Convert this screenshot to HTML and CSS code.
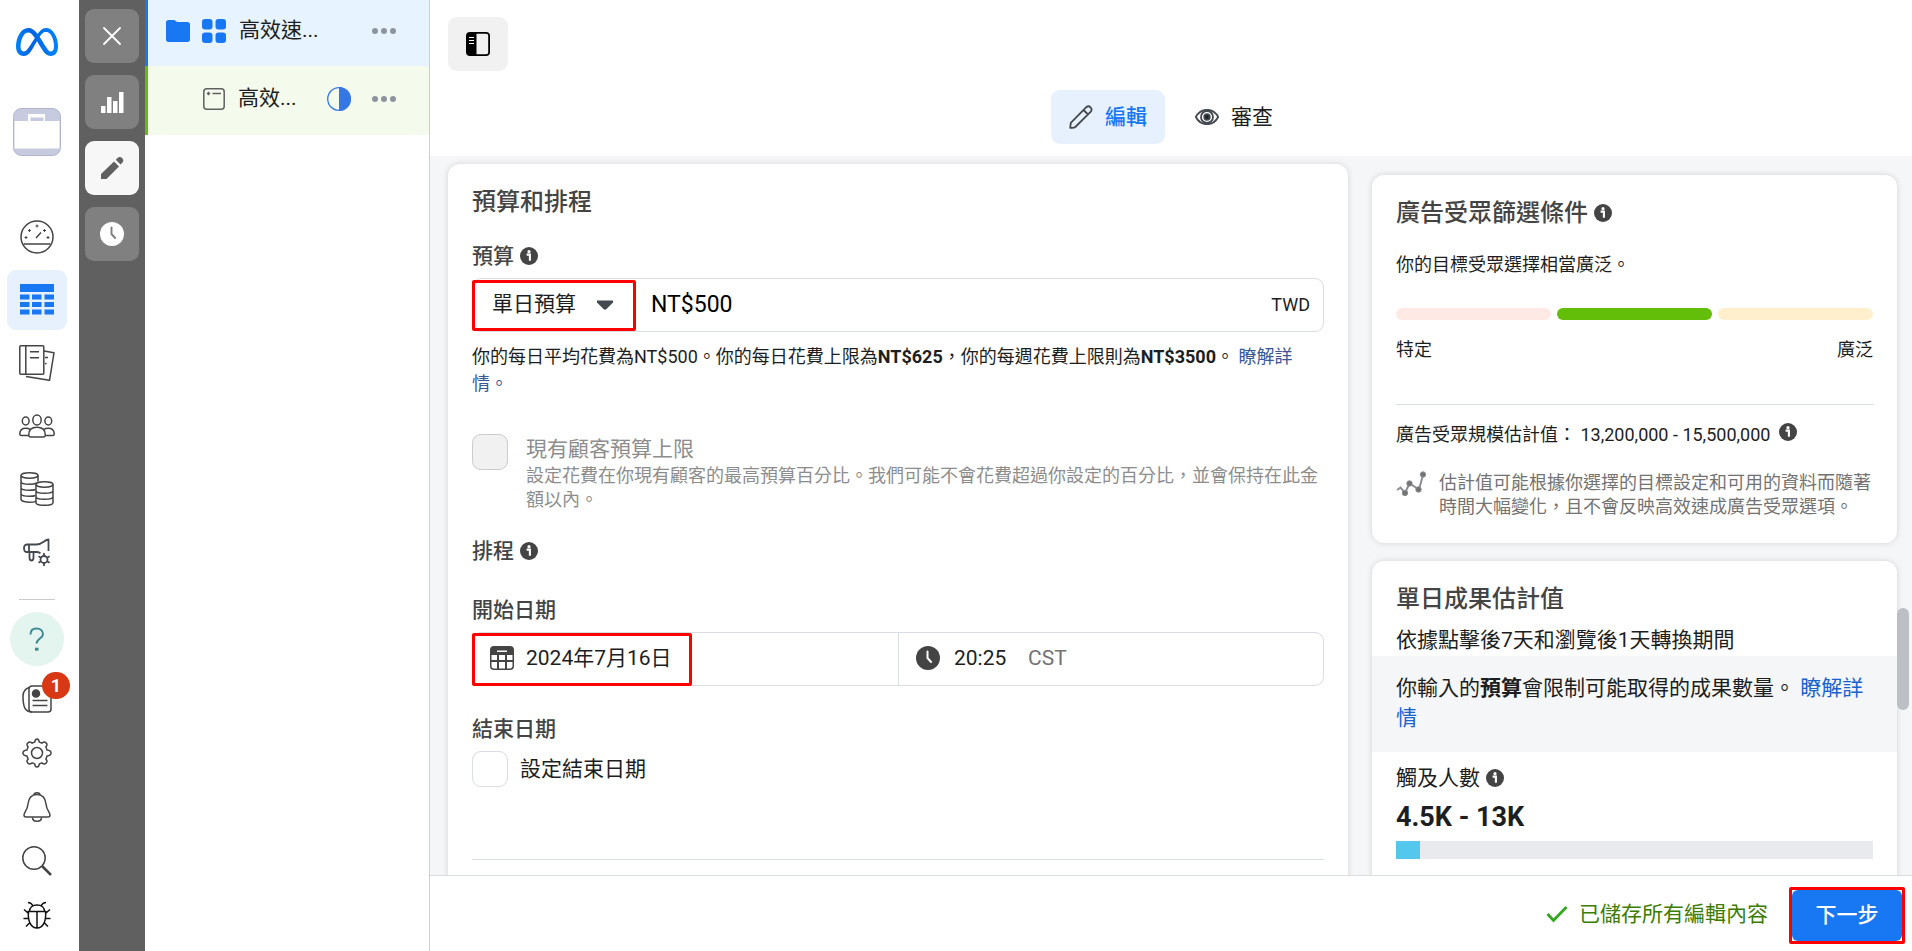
FILE: index.html
```html
<!DOCTYPE html>
<html lang="zh-Hant">
<head>
<meta charset="utf-8">
<title>廣告管理員</title>
<link rel="stylesheet" href="styles.css">
</head>
<body>
<svg class="defs" aria-hidden="true">
  <defs>
    <linearGradient id="meta-blue" x1="0" x2="1" y1="0" y2="0">
      <stop offset="0" stop-color="#0082fb"/><stop offset=".35" stop-color="#0064e0"/><stop offset=".65" stop-color="#0073ee"/><stop offset="1" stop-color="#0082fb"/>
    </linearGradient>
    <symbol id="info" viewBox="0 0 18 18">
      <circle cx="9" cy="9" r="9" fill="currentColor"/>
      <circle cx="9" cy="4.7" r="1.6" fill="#fff"/>
      <path d="M6.6 7.6h3.3v6.2" fill="none" stroke="#fff" stroke-width="2.1"/>
    </symbol>
    <symbol id="dots" viewBox="0 0 24 8">
      <circle cx="3" cy="4" r="3"/><circle cx="12" cy="4" r="3"/><circle cx="21" cy="4" r="3"/>
    </symbol>
    <symbol id="clock" viewBox="0 0 24 24">
      <circle cx="12" cy="12" r="12" fill="currentColor"/>
      <path d="M11.5 5.5v6.5l3.6 4" fill="none" stroke="var(--hand)" stroke-width="2" stroke-linecap="round" stroke-linejoin="round"/>
    </symbol>
  </defs>
</svg>
<div class="app">
  <nav class="nav">
    <a class="logo" href="#" aria-label="Meta"><svg width="42" height="28" viewBox="0 4 24 16"><path fill="url(#meta-blue)" d="M6.915 4.03c-1.968 0-3.683 1.28-4.871 3.113C.704 9.208 0 11.883 0 14.449c0 .706.07 1.369.21 1.973a6.624 6.624 0 0 0 .265.86 5.297 5.297 0 0 0 .371.761c.696 1.159 1.818 1.927 3.593 1.927 1.497 0 2.633-.671 3.965-2.444.76-1.012 1.144-1.626 2.663-4.32l.756-1.339.186-.325c.061.1.121.196.183.3l2.152 3.595c.724 1.21 1.665 2.556 2.47 3.314 1.046.987 1.992 1.22 3.06 1.22 1.075 0 1.876-.355 2.455-.843a3.743 3.743 0 0 0 .81-.973c.542-.939.861-2.127.861-3.745 0-2.72-.681-5.357-2.084-7.45-1.282-1.912-2.957-2.93-4.716-2.93-1.047 0-2.088.467-3.053 1.308-.652.57-1.257 1.29-1.82 2.05-.69-.875-1.335-1.547-1.958-2.056-1.182-.966-2.315-1.303-3.454-1.303zm10.16 2.053c1.147 0 2.188.758 2.992 1.999 1.132 1.748 1.647 4.195 1.647 6.4 0 1.548-.368 2.9-1.839 2.9-.58 0-1.027-.23-1.664-1.004-.496-.601-1.343-1.878-2.832-4.358l-.617-1.028a44.908 44.908 0 0 0-1.255-1.98c.07-.109.141-.224.211-.327 1.12-1.667 2.118-2.602 3.358-2.602zm-10.201.553c1.265 0 2.058.791 2.675 1.446.307.327.737.871 1.234 1.579l-1.02 1.566c-.757 1.163-1.882 3.017-2.837 4.338-1.191 1.649-1.81 1.817-2.486 1.817-.524 0-1.038-.237-1.383-.794-.263-.426-.464-1.13-.464-2.046 0-2.221.63-4.535 1.66-6.088.454-.687.964-1.226 1.533-1.533a2.264 2.264 0 0 1 1.088-.285z"/></svg></a>
    <a class="account" href="#" aria-label="帳號"><svg width="48" height="48" viewBox="0 0 48 48"><rect x=".5" y=".5" width="47" height="47" rx="8" fill="#c6cbe0" stroke="#b0b5cc"/><path d="M1.500 13H15V6h17v7h14.500v27.500h-45z" fill="#fff"/><path d="M17.500 9.500h13V13h-13z" fill="#c6cbe0"/></svg></a>
    <a class="slot" href="#" aria-label="帳號總覽"><svg width="36" height="36" viewBox="0 0 36 36" class="line"><circle cx="18" cy="18" r="16"/><path d="M4.500 25h27M17 19l5-5.500"/><path d="M18 5.500v3M16.500 7h3M10.500 10v3M9 11.500h3M25.500 10v3M24 11.500h3M7 17v3M5.500 18.500h3M29 17v3M27.500 18.500h3" stroke-width="1"/></svg></a>
    <a class="slot active" href="#" aria-label="行銷活動"><svg width="34" height="32" viewBox="0 0 34 32" fill="#1877f2"><path d="M0 0h34v8H0zM0 10.500h9.500v5H0zM12 10.500h9.500v5H12zM24.500 10.500H34v5h-9.500zM0 18h9.500v5H0zM12 18h9.500v5H12zM24.500 18H34v5h-9.500zM0 25.500h9.500v5H0zM12 25.500h9.500v5H12zM24.500 25.500H34v5h-9.500z"/></svg></a>
    <a class="slot" href="#" aria-label="報告"><svg width="36" height="36" viewBox="0 0 36 36" class="line"><rect x=".8" y=".8" width="24" height="28.500" rx="1"/><path d="M6.800 1v28M11 6.800h9M11 12.800h9M25 6l10 1.800-4.500 27.500L7 31.500M26 12.500h3M26 18.500l1.500.3"/></svg></a>
    <a class="slot" href="#" aria-label="廣告受眾"><svg width="36" height="24" viewBox="0 0 36 24" class="line"><ellipse cx="18" cy="6" rx="4.200" ry="5"/><ellipse cx="6.700" cy="7" rx="3.400" ry="4"/><ellipse cx="29.300" cy="7" rx="3.400" ry="4"/><path d="M9.700 21c0-5 2.300-7.700 8.300-7.700s8.300 2.700 8.300 7.700c0 1.300-.8 2-2 2H11.700c-1.200 0-2-.7-2-2zM10 21.500H2.500c-1.300 0-1.800-.7-1.700-2 .3-3.500 2-5.300 5.900-5.300 2 0 3.300.4 4.300 1.300M26 21.500h7.500c1.300 0 1.800-.7 1.700-2-.3-3.500-2-5.300-5.900-5.300-2 0-3.300.4-4.300 1.300"/></svg></a>
    <a class="slot" href="#" aria-label="帳單"><svg width="34" height="34" viewBox="0 0 34 34" class="line"><ellipse cx="9.500" cy="3.500" rx="8.500" ry="2.700"/><path d="M1 3.500v23.800c0 2 5 3 8.500 3s5.500-.5 6.500-1M18 3.500v6M1 9.500c0 2 5 2.800 8.500 2.800s6-.6 7.500-1.300M1 15.500c0 2 5 2.800 8.500 2.800 3 0 4.500-.2 6-.8M1 21.500c0 2 5 2.800 8.500 2.800 3 0 4.500-.2 6-.8"/><ellipse cx="24.500" cy="12.500" rx="8.500" ry="2.700"/><path d="M16 12.500v18c0 2 5 2.800 8.500 2.800s8.500-.8 8.500-2.800v-18M16 18.500c0 2 5 2.800 8.500 2.800s8.500-.8 8.500-2.800M16 24.500c0 2 5 2.800 8.500 2.800s8.500-.8 8.500-2.800"/></svg></a>
    <a class="slot" href="#" aria-label="廣告設定"><svg width="28" height="28" viewBox="0 0 28 28" class="line heavy"><path d="M25.500 13V1.500c-4 0-5.500 5-12 5H4C1.500 6.500 1 8.500 1 10.200S1.500 14 4 14h9.500c2 0 3 .6 4 1.200M6 6.500V14M6.500 14v5.500c0 4 4 4 4 0V14"/><circle cx="21" cy="21.500" r="3.500"/><path d="M21 15v3M21 25v3M15.500 18.200l2.600 1.500M24 23.300l2.600 1.500M15.500 24.800l2.600-1.500M24 19.700l2.600-1.500"/></svg></a>
    <hr class="nav-line">
    <a class="help" href="#" aria-label="說明"><svg width="18" height="24" viewBox="0 0 18 24" fill="none" stroke="#3c8a94" stroke-width="2"><path d="M2.500 7.500C2.500 3.500 5 1.500 8.500 1.500s6.500 2 6.500 5.700c0 4-6.500 4.800-6.500 9.300"/><path d="M7 22.200h3.500" stroke-width="3"/></svg></a>
    <a class="slot small news" href="#" aria-label="最新消息"><svg width="30" height="28" viewBox="0 0 30 28" class="line"><rect x="7" y="1" width="22" height="26" rx="3"/><path d="M7 2.500C3 4 1 7 1 11c0 11 2 16 9 16"/><circle cx="14" cy="8.500" r="3.500" fill="#444"/><path d="M10.500 15.500h15M10.500 20.500h15"/></svg><span class="badge">1</span></a>
    <a class="slot small" href="#" aria-label="設定"><svg width="30" height="30" viewBox="0 0 30 30" class="line"><circle cx="15" cy="15" r="5.500"/><path d="M15 .9c1.800 0 2 .9 2.300 3.200.9.300 1.700.6 2.500 1.100 2-1.500 2.900-1.700 4-.6 2 1.900 1.300 2.600 0 4.400.5.900.9 1.900 1.200 3 2.600.4 4.100.8 4.100 3s-1.500 2.600-4.100 3c-.3 1.100-.7 2.100-1.200 3 1.300 1.800 2 2.500 0 4.400-1.100 1.100-2 .9-4-.6-.8.500-1.600.8-2.500 1.100-.3 2.300-.5 3.200-2.300 3.200s-2-.9-2.300-3.200c-.9-.3-1.700-.6-2.500-1.100-2 1.500-2.900 1.700-4 .6-2-1.900-1.300-2.600 0-4.400-.5-.9-.9-1.900-1.200-3-2.600-.4-4.100-.8-4.100-3s1.500-2.600 4.100-3c.3-1.100.7-2.100 1.200-3-1.300-1.800-2-2.500 0-4.400 1.100-1.100 2-.9 4 .6.800-.5 1.600-.8 2.500-1.100C13 1.800 13.200.9 15 .9z"/></svg></a>
    <a class="slot small" href="#" aria-label="通知"><svg width="28" height="30" viewBox="0 0 28 30" class="line"><path d="M14 2.500c-6 0-8.500 4.500-9 9.500-.5 6-4 8.500-4 11 0 1.500.8 2 2 2h22c1.200 0 2-.5 2-2 0-2.500-3.500-5-4-11-.5-5-3-9.500-9-9.500z"/><path d="M11 3c0-3 6-3 6 0M9.500 25.500c0 5 9 5 9 0"/></svg></a>
    <a class="slot small" href="#" aria-label="搜尋"><svg width="30" height="30" viewBox="0 0 30 30" class="line"><circle cx="12" cy="12" r="11.200"/><path d="M20 20l9 9" stroke-width="2.500"/></svg></a>
    <a class="slot small" href="#" aria-label="回報問題"><svg width="28" height="28" viewBox="0 0 28 28" class="line bug"><path d="M4.500 10.500h19M14 10.500V27M6.500 10.500c0-4 3-6.500 7.500-6.500s7.500 2.500 7.500 6.500M5.500 10.500C4.500 20 8 27 14 27s9.500-7 8.500-16.500M10 5C9 3 7.500 1.500 5 1.500M18 5c1-2 2.500-3.500 5-3.500M1 8.500l4 3.500M27 8.500L23 12M.5 17.500h5M27.500 17.500h-5M3 25.500l4-4M25 25.500l-4-4"/></svg></a>
  </nav>

  <div class="rail">
    <button class="rail-btn" aria-label="關閉"><svg width="20" height="20" viewBox="0 0 20 20"><path d="M2 2l16 16M18 2L2 18" stroke="#fff" stroke-width="1.800" stroke-linecap="round"/></svg></button>
    <button class="rail-btn" aria-label="圖表"><svg width="24" height="24" viewBox="0 0 24 24" fill="#fff"><path d="M1 16h4.500v7H1zM7 7h4.500v16H7zM13 11h4.500v12H13zM19 2h4.500v21H19z"/></svg></button>
    <button class="rail-btn on" aria-label="編輯"><svg width="24" height="24" viewBox="0 0 24 24" fill="#606060"><path d="M1 18L14 5.500l5 5L6.500 23H1zM15.800 3.700l1.900-2c2.800-2.600 7.400 1.800 4.800 4.800l-2 2z"/></svg></button>
    <button class="rail-btn" aria-label="紀錄"><svg width="24" height="24" class="rail-clock"><use href="#clock"/></svg></button>
  </div>

  <aside class="tree">
    <div class="row campaign">
      <svg width="24" height="22" viewBox="0 0 24 22"><path d="M0 2.500C0 1 1 0 2.500 0h5c2 0 2.500 2 4.500 2h9.500C23 2 24 3 24 4.500v15c0 1.500-1 2.500-2.500 2.500h-19C1 22 0 21 0 19.500z" fill="#1877f2"/></svg>
      <svg class="second" width="24" height="24" viewBox="0 0 24 24" fill="#1877f2"><rect width="10.500" height="10.500" rx="3"/><rect x="13.500" width="10.500" height="10.500" rx="3"/><rect y="13.500" width="10.500" height="10.500" rx="3"/><rect x="13.500" y="13.500" width="10.500" height="10.500" rx="3"/></svg>
      <span class="name">高效速...</span>
      <button class="more" aria-label="更多"><svg width="24" height="8"><use href="#dots"/></svg></button>
    </div>
    <div class="row ad">
      <svg width="22" height="22" viewBox="0 0 22 22" fill="none" stroke="#606060" stroke-width="1.500"><rect x=".8" y=".8" width="20.400" height="20.400" rx="3"/><path d="M9.500 5.500H18M5.500 3.800v3.400M3.800 5.500h3.400"/></svg>
      <span class="name">高效...</span>
      <svg width="24" height="24" viewBox="0 0 24 24"><circle cx="12" cy="12" r="11.300" fill="none" stroke="#3578e5" stroke-width="1.300"/><path d="M12 0a12 12 0 0 1 0 24z" fill="#3578e5"/></svg>
      <button class="more" aria-label="更多"><svg width="24" height="8"><use href="#dots"/></svg></button>
    </div>
  </aside>

  <main class="main">
    <header class="top">
      <button class="panel-btn" aria-label="切換側邊欄"><svg width="24" height="24" viewBox="0 0 24 24"><rect width="24" height="24" rx="4"/><path d="M10.500 1.800H20c1.500 0 2.200.7 2.200 2.200v16c0 1.500-.7 2.200-2.200 2.200h-9.500z" fill="#f1f1f1"/><path d="M3 5.500h5M3 8.500h5M3 11.500h5" stroke="#fff" stroke-width="1.200"/></svg></button>
      <div class="tabs">
        <button class="tab on"><svg width="24" height="24" viewBox="0 0 24 24" fill="none" stroke="#444950" stroke-width="1.800" stroke-linejoin="round"><path d="M1.200 22.800l.6-5L17.300 2.200c3-2.600 6.800 1.300 4.500 4.500L6.300 22c-1.500 1.200-3.300.8-5.100.8zM14.500 5l4.500 4.500"/></svg><span>編輯</span></button>
        <button class="tab"><svg width="24" height="16" viewBox="0 0 24 16" fill="none" stroke="#444950" stroke-width="1.800"><path d="M.8 8C6-1.600 18-1.600 23.200 8 18 17.600 6 17.600.8 8z"/><circle cx="12" cy="8" r="6"/><circle cx="12" cy="8" r="2.800" fill="#1c1e21"/></svg><span>審查</span></button>
      </div>
    </header>

    <div class="content">
      <section class="card form">
        <h2>預算和排程</h2>
        <div class="label"><label for="budget">預算</label><svg class="info" width="18" height="18"><use href="#info"/></svg></div>
        <div class="field">
          <div class="marked pick">
            <select aria-label="預算類型"><option>單日預算</option></select>
            <svg class="caret" width="16" height="10" viewBox="0 0 16 10"><path d="M0 .5h16v2L9.500 9c-1 1-2 1-3 0L0 2.500z" fill="#444950"/></svg>
          </div>
          <input id="budget" class="amount" type="text" value="NT$500">
          <span class="unit">TWD</span>
        </div>
        <p class="hint">你的每日平均花費為NT$500。你的每日花費上限為<b>NT$625</b>，你的每週花費上限則為<b>NT$3500</b>。 <a href="#">瞭解詳情。</a></p>
        <div class="check disabled">
          <input type="checkbox" id="cap" disabled>
          <div>
            <label for="cap">現有顧客預算上限</label>
            <p>設定花費在你現有顧客的最高預算百分比。我們可能不會花費超過你設定的百分比，並會保持在此金額以內。</p>
          </div>
        </div>
        <div class="label schedule"><span>排程</span><svg class="info" width="18" height="18"><use href="#info"/></svg></div>
        <div class="label start"><label for="start">開始日期</label></div>
        <div class="field dates">
          <div class="half">
            <div class="marked date">
              <svg width="24" height="24" viewBox="0 0 24 24"><rect width="24" height="24" rx="4" fill="#444"/><path d="M1.500 9h5.500v5H1.500zM9 9h6v5H9zM17 9h5.500v5H17zM1.500 16h5.500v6.500H4c-1.500 0-2.500-1-2.500-2.500zM9 16h6v6.500H9zM17 16h5.500v4c0 1.500-1 2.500-2.500 2.500h-3zM7 4.500h10v1.500H7z" fill="#fff"/></svg>
              <input id="start" type="text" value="2024年7月16日">
            </div>
          </div>
          <div class="half time">
            <svg width="24" height="24" class="time-clock"><use href="#clock"/></svg>
            <input type="text" aria-label="開始時間" value="20:25">
            <span>CST</span>
          </div>
        </div>
        <div class="label end"><span>結束日期</span></div>
        <div class="check until">
          <input type="checkbox" id="until">
          <label for="until">設定結束日期</label>
        </div>
        <hr class="rule">
      </section>

      <div class="side">
        <section class="card audience">
          <h2>廣告受眾篩選條件<svg class="info" width="18" height="18"><use href="#info"/></svg></h2>
          <p class="lead">你的目標受眾選擇相當廣泛。</p>
          <div class="meter"><i class="narrow"></i><i class="fit"></i><i class="broad"></i></div>
          <div class="ends"><span>特定</span><span>廣泛</span></div>
          <hr class="rule">
          <p class="size"><span>廣告受眾規模估計值： 13,200,000 - 15,500,000</span><svg class="info" width="18" height="18"><use href="#info"/></svg></p>
          <div class="note">
            <svg width="30" height="26" viewBox="0 0 30 26" fill="#737373" stroke="#8a8d91"><path d="M1 19l3.500-2.500L9 22l4.500-9.500L23 18.500 27 4" fill="none" stroke-width="2"/><circle cx="9" cy="22" r="2.700"/><circle cx="13.500" cy="12.500" r="2.700"/><circle cx="22.500" cy="18.500" r="2.700"/><circle cx="27" cy="3.500" r="2.700"/></svg>
            <p>估計值可能根據你選擇的目標設定和可用的資料而隨著時間大幅變化，且不會反映高效速成廣告受眾選項。</p>
          </div>
        </section>
        <section class="card results">
          <h2>單日成果估計值</h2>
          <p class="basis">依據點擊後7天和瀏覽後1天轉換期間</p>
          <p class="notice">你輸入的<b>預算</b>會限制可能取得的成果數量。 <a href="#">瞭解詳情</a></p>
          <p class="reach"><span>觸及人數</span><svg class="info" width="18" height="18"><use href="#info"/></svg></p>
          <p class="range">4.5K - 13K</p>
          <div class="bar"><div class="fill" style="width:5%"></div></div>
        </section>
      </div>
      <div class="thumb"></div>
    </div>

    <footer class="foot">
      <p class="saved"><svg width="22" height="18" viewBox="0 0 22 18"><path d="M1.500 9l6 6.500L20.500 2" fill="none" stroke="#31a81e" stroke-width="2.800"/></svg>已儲存所有編輯內容</p>
      <div class="marked action"><button class="next">下一步</button></div>
    </footer>
  </main>
</div>
</body>
</html>
```
FILE: styles.css
```css
* { box-sizing: border-box; margin: 0; }
:root { --line: #dadde1; --ink: #1c1e21; --blue: #1877f2; --red: #f00; }
body { font-family: Roboto, "Noto Sans CJK TC", sans-serif; font-size: 21px; line-height: 30px; color: var(--ink); background: #fff; overflow: hidden; }
button, input, select { font: inherit; color: inherit; border: 0; background: none; padding: 0; outline: 0; }
a { color: inherit; text-decoration: none; }
svg { display: block; flex: none; }
.defs { position: absolute; width: 0; height: 0; }
.app { display: flex; height: 100vh; }

.nav { width: 79px; flex: none; display: flex; flex-direction: column; align-items: center; padding-right: 5px; }
.logo { margin-top: 28px; }
.account { margin: 52px 0 51px; }
.slot { width: 60px; height: 60px; margin-bottom: 3px; border-radius: 9px; display: flex; align-items: center; justify-content: center; flex: none; }
.slot.active { background: #e7f1fd; }
.slot.small { height: 54px; margin: 0; }
.line { fill: none; stroke: #444; stroke-width: 1.5; stroke-linejoin: round; }
.line.heavy { stroke: #444950; stroke-width: 1.8; }
.line.bug { stroke: #111; }
.nav-line { width: 36px; margin: 14px 0 12px; border: 0; border-top: 1px solid #ccc; }
.help { width: 54px; height: 54px; border-radius: 50%; background: #e4f4ef; display: flex; align-items: center; justify-content: center; flex: none; margin-bottom: 6px; }
.news { position: relative; }
.badge { position: absolute; left: 35px; top: 0; width: 28px; height: 27px; border-radius: 14px; background: #d93815; color: #fff; font-size: 18px; line-height: 27px; font-weight: 700; text-align: center; }

.rail { width: 66px; flex: none; background: #606060; padding: 9px 6px; display: flex; flex-direction: column; gap: 12px; }
.rail-btn { height: 54px; border-radius: 9px; background: #808080; display: flex; align-items: center; justify-content: center; }
.rail-btn.on { background: #f7f7f7; }
.rail-clock { color: #fff; --hand: #808080; }

.tree { width: 285px; flex: none; border-right: 1px solid #ccd0d5; }
.row { display: flex; align-items: center; height: 69px; padding: 0 33px 3px 18px; border-left: 3px solid; }
.row.campaign { height: 66px; padding-bottom: 5px; background: #e7f3ff; border-color: var(--blue); }
.row.ad { padding-left: 55px; background: #f4faec; border-color: #63be09; }
.second { margin-left: 12px; }
.name { flex: 1; margin-left: 13px; padding-bottom: 2px; }
.more { margin-left: 21px; fill: #8d949e; }

.main { flex: 1; min-width: 0; display: flex; flex-direction: column; }
.top { height: 156px; flex: none; padding: 17px 18px 0; }
.panel-btn { width: 60px; height: 54px; border-radius: 9px; background: #f1f1f1; display: flex; align-items: center; justify-content: center; }
.tabs { display: flex; justify-content: center; gap: 12px; margin-top: 19px; }
.tab { height: 54px; padding: 0 18px; border-radius: 9px; display: flex; align-items: center; gap: 12px; }
.tab.on { background: #e7f1fd; color: var(--blue); font-weight: 500; }

.content { flex: 1; min-height: 0; overflow: hidden; position: relative; background: #f5f6f8; display: flex; align-items: flex-start; gap: 24px; padding: 8px 15px 0 18px; }
.card { background: #fff; border-radius: 12px; box-shadow: 0 0 6px rgba(0, 0, 0, .14); padding: 20px 24px 0; }
.form { flex: 1; min-width: 0; height: 800px; }
h2 { font-size: 24px; line-height: 36px; font-weight: 500; color: #444; display: flex; align-items: center; gap: 6px; }
.info { color: #444; }
.label { display: flex; align-items: center; gap: 6px; margin: 21px 0 7px; font-weight: 500; color: #444; }
.field { height: 54px; border: 1px solid var(--line); border-radius: 9px; display: flex; align-items: center; }
.marked { position: relative; display: flex; align-items: center; }
.marked::after { content: ""; position: absolute; inset: 0; border: 3px solid var(--red); border-radius: 2px; pointer-events: none; }
.pick { width: 164px; height: 51px; margin-left: -1px; }
.pick select { appearance: none; width: 100%; height: 48px; padding: 0 0 3px 20px; }
.caret { position: absolute; right: 23px; top: 20px; pointer-events: none; }
.amount { flex: 1; min-width: 0; margin-left: 15px; font-size: 23px; color: #000; }
.unit { font-size: 18px; margin-right: 13px; }
.hint { margin-top: 11px; font-size: 18px; line-height: 27px; }
.hint a { color: #385898; }
.check { display: flex; gap: 18px; }
.check input { appearance: none; width: 36px; height: 36px; flex: none; border: 1px solid var(--line); border-radius: 9px; background: #fff; }
.check label { display: block; }
.disabled { margin-top: 37px; color: #8d8d8d; }
.disabled input { background: #f1f1f1; border-color: #ccc; }
.disabled p { font-size: 18px; line-height: 24px; }
.schedule { margin: 24px 0 0; }
.start { margin-top: 29px; }
.dates { display: grid; grid-template-columns: 1fr 1fr; }
.half { height: 52px; min-width: 0; display: flex; align-items: center; }
.date { width: 220px; height: 53px; margin: 1px 0 0 -1px; padding: 0 4px 3px 18px; gap: 12px; }
.half input { width: 150px; }
.time { border-left: 1px solid var(--line); padding: 0 0 2px 17px; gap: 14px; }
.time input { width: 60px; }
.time span { color: #737373; }
.time-clock { color: #444; --hand: #fff; }
.end { margin-top: 28px; }
.until { gap: 12px; align-items: center; }
.rule { border: 0; border-top: 1px solid var(--line); }
.until + .rule { margin-top: 72px; }

.side { width: 525px; flex: none; padding-top: 11px; display: grid; gap: 18px; }
.audience { padding-bottom: 24px; }
.lead, .ends, .size, .note { font-size: 18px; line-height: 24px; }
.lead { margin-top: 22px; }
.meter { display: flex; gap: 6px; margin-top: 31px; }
.meter i { flex: 1; height: 12px; border-radius: 6px; }
.narrow { background: #ffe9e5; }
.fit { background: #63be09; }
.broad { background: #ffefcd; }
.ends { display: flex; justify-content: space-between; margin: 18px 0 42px; }
.size { display: flex; gap: 9px; margin-top: 18px; }
.note { display: flex; gap: 13px; margin-top: 24px; color: #737373; }
.results { height: 400px; }
.basis { margin-top: 8px; }
.notice { margin: 1px -24px 0; padding: 17px 24px 19px; background: #f5f6f8; }
.notice a { color: #1763cf; }
.reach { display: flex; align-items: center; gap: 6px; margin-top: 11px; }
.range { font-size: 27px; line-height: 36px; font-weight: 700; margin-top: 6px; }
.bar { height: 18px; margin-top: 6px; background: #e9eaee; }
.fill { height: 100%; background: #54c7ec; }
.thumb { position: absolute; right: 3px; top: 452px; width: 12px; height: 102px; border-radius: 6px; background: #bcc0c4; }

.foot { height: 76px; flex: none; border-top: 1px solid var(--line); display: flex; align-items: flex-start; justify-content: flex-end; gap: 21px; padding: 11px 7px 0; }
.saved { display: flex; align-items: center; gap: 11px; height: 54px; color: #3a7d00; }
.action { padding: 3px; }
.next { width: 110px; height: 51px; padding-bottom: 2px; border-radius: 6px; background: var(--blue); color: #fff; font-weight: 500; }
```
